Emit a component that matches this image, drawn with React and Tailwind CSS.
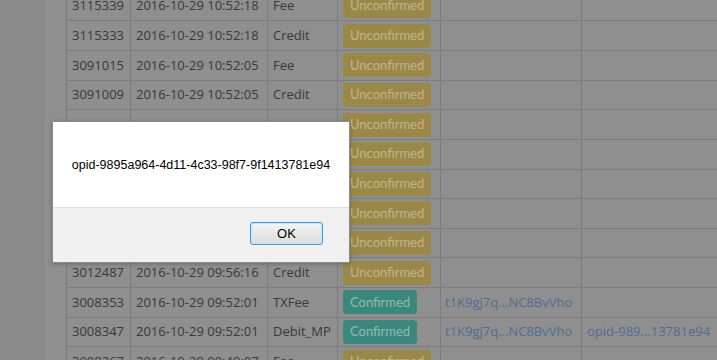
const rows = [
  { id: "3115339", date: "2016-10-29 10:52:18", type: "Fee", ok: false },
  { id: "3115333", date: "2016-10-29 10:52:18", type: "Credit", ok: false },
  { id: "3091015", date: "2016-10-29 10:52:05", type: "Fee", ok: false },
  { id: "3091009", date: "2016-10-29 10:52:05", type: "Credit", ok: false },
  // rows under the alert box: nothing of them shows
  { id: "", date: "", type: "", ok: false },
  { id: "", date: "", type: "", ok: false },
  { id: "", date: "", type: "", ok: false },
  { id: "", date: "", type: "", ok: false },
  { id: "", date: "", type: "", ok: false },
  { id: "3012487", date: "2016-10-29 09:56:16", type: "Credit", ok: false },
  {
    id: "3008353",
    date: "2016-10-29 09:52:01",
    type: "TXFee",
    ok: true,
    addr: "t1K9gj7q...NC8BvVho",
  },
  {
    id: "3008347",
    date: "2016-10-29 09:52:01",
    type: "Debit_MP",
    ok: true,
    addr: "t1K9gj7q...NC8BvVho",
    opid: "opid-989...13781e94",
  },
  { id: "3008267", date: "2016-10-29 09:49:07", type: "Fee", ok: false },
];

const Badge = ({ ok }) =>
  ok ? (
    <span className="inline-flex items-center h-[24px] px-[7px] rounded-[4px] bg-[#3b877c] text-[#8fbcb2] text-[13px] font-['Lato',sans-serif]">
      Confirmed
    </span>
  ) : (
    <span className="inline-flex items-center h-[24px] px-[7px] rounded-[4px] bg-[#9a8848] text-[#c2b58a] text-[13px] font-['Lato',sans-serif]">
      Unconfirmed
    </span>
  );

const App = () => {
  return (
    <div className="relative w-[717px] h-[360px] overflow-hidden bg-[#8f8f8f] flex font-['Open_Sans',sans-serif]">
      <div className="w-[45px] shrink-0 bg-[#8a8a8a]" />
      <div className="pl-[21px] shrink-0">
        <div className="mt-[-8.35px] border-l border-[#7d7d7d] w-[720px]">
          {rows.map((r, i) => (
            <div
              key={i}
              className="grid grid-cols-[64px_137px_70px_103px_141px_205px] h-[29.65px] text-[13px] text-[#393939]"
            >
              <div className="border-r border-b border-[#7d7d7d] pl-[5px] flex items-center">
                {r.id}
              </div>
              <div className="border-r border-b border-[#7d7d7d] pl-[5px] flex items-center whitespace-nowrap">
                {r.date}
              </div>
              <div className="border-r border-b border-[#7d7d7d] pl-[5px] flex items-center">
                {r.type}
              </div>
              <div className="border-r border-b border-[#7d7d7d] pl-[5px] flex items-center">
                <Badge ok={r.ok} />
              </div>
              <div className="border-r border-b border-[#7d7d7d] pl-[4px] flex items-center text-[#4f6d94] whitespace-nowrap">
                {r.addr}
              </div>
              <div className="border-b border-[#7d7d7d] pl-[5px] flex items-center text-[#4f6d94] whitespace-nowrap">
                {r.opid}
              </div>
            </div>
          ))}
        </div>
      </div>

      {/* alert box */}
      <div className="absolute left-[52px] top-[121px] w-[298px] h-[142px] bg-white border border-[#8a8a8a] shadow-[0_1px_4px_rgba(0,0,0,0.25)] flex flex-col font-['Liberation_Sans',Arial,sans-serif]">
        <div className="h-[85px] flex items-center justify-center pt-[1px] text-[12.5px] text-black">
          opid-9895a964-4d11-4c33-98f7-9f1413781e94
        </div>
        <div className="flex-1 bg-[#f0f0f0] border-t border-[#dfdfdf] flex justify-end items-start pt-[14px] pr-[26px]">
          <button className="w-[73px] h-[23px] rounded-[3px] border border-[#3c9ae0] bg-gradient-to-b from-[#f4f4f4] to-[#dcdcdc] text-[13px] text-black leading-none shadow-[inset_0_0_0_1px_#bfe3fb]">
            OK
          </button>
        </div>
      </div>
    </div>
  );
};

export default App;
